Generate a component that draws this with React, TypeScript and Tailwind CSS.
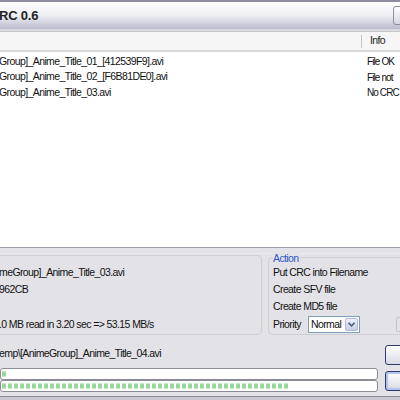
import React from 'react';

const rows = [
  { name: 'Group]_Anime_Title_01_[412539F9].avi', info: 'File OK' },
  { name: 'Group]_Anime_Title_02_[F6B81DE0].avi', info: 'File not' },
  { name: 'Group]_Anime_Title_03.avi', info: 'No CRC' },
];

const Blocks: React.FC<{ count: number }> = ({ count }) => (
  <div className="flex gap-[2px] pl-[1px] items-center h-full">
    {Array.from({ length: count }).map((_, i) => (
      <div key={i} className="w-[4px] h-[6px] bg-[#9ad69a] border-t border-b border-[#c4ebc4]" />
    ))}
  </div>
);

const App: React.FC = () => {
  return (
    <div className="w-[400px] h-[400px] overflow-hidden flex flex-col bg-[#e3e2e7] text-[#111] whitespace-nowrap font-['Liberation_Sans',Arial,sans-serif] text-[10.5px] tracking-[-0.6px]">
      {/* title bar */}
      <div className="h-[29px] shrink-0 border-t-2 border-[#8d8c9e] bg-gradient-to-b from-[#ffffff] via-[#eeeef3] to-[#bbbacd] flex items-center justify-between">
        <span className="text-[13px] font-semibold tracking-[-0.2px] text-[#222] -ml-[1px] mt-[1px]">RC 0.6</span>
        <div className="w-[10px] h-[19px] -mr-[3px] rounded-[3px] border border-[#8e8ea0] bg-gradient-to-b from-[#ffffff] to-[#d6d6e0]" />
      </div>
      <div className="h-[3px] shrink-0 bg-[#dadae0] border-b border-[#c8c8d0]" />

      {/* list header */}
      <div className="h-[20px] shrink-0 bg-[#f6f6f6] border-b-2 border-[#d9d9d9] flex items-center">
        <div className="flex-1" />
        <div className="w-[1px] h-[13px] bg-[#c5c5c5]" />
        <span className="w-[38px] pl-[8px] text-[#222]">Info</span>
      </div>

      {/* list */}
      <div className="h-[196px] shrink-0 bg-white border-b border-[#9c9ca8] pt-[2px]">
        {rows.map(r => (
          <div key={r.name} className="h-[15.5px] flex items-center">
            <span className="flex-1 -ml-[1px]">{r.name}</span>
            <span className="w-[33px] text-[10px] tracking-[-0.9px]">{r.info}</span>
          </div>
        ))}
      </div>

      {/* lower panel */}
      <div className="flex-1 flex flex-col">
        <div className="h-[6px] border-b border-[#ecebef]" />
        <div className="flex gap-[6px] mt-[1px]">
          <div className="w-[262px] h-[80px] shrink-0 border border-l-0 border-[#cfcdd6] rounded-r-[5px] flex flex-col pt-[8px]">
            <div className="h-[17.5px] flex items-center -ml-[1px]">meGroup]_Anime_Title_03.avi</div>
            <div className="h-[17.5px] flex items-center -ml-[1px]">962CB</div>
            <div className="h-[17.5px]" />
            <div className="h-[17.5px] flex items-center -ml-[1px]">.0 MB read in 3.20 sec =&gt; 53.15 MB/s</div>
          </div>
          <div className="relative w-[150px] h-[78px] mt-[2px] shrink-0 border border-r-0 border-[#cfcdd6] rounded-l-[5px] flex flex-col pt-[6px] pl-[4px]">
            <span className="absolute -top-[7px] left-[3px] px-[1px] bg-[#e3e2e7] text-[#2f55c8]">Action</span>
            <div className="h-[17.5px] flex items-center">Put CRC into Filename</div>
            <div className="h-[17.5px] flex items-center">Create SFV file</div>
            <div className="h-[17.5px] flex items-center">Create MD5 file</div>
            <div className="h-[19px] flex items-center">
              <span className="w-[35px]">Priority</span>
              <div className="w-[52px] h-[17px] border border-[#7f9db9] bg-white flex items-center justify-between pl-[2px] pr-[1px]">
                <span>Normal</span>
                <div className="w-[13px] h-[13px] rounded-[2px] border border-[#b5b9cf] bg-gradient-to-b from-[#eef0fb] to-[#c8cde6] flex items-center justify-center">
                  <svg width="7" height="5" viewBox="0 0 7 5"><path d="M0.5 0.8 L3.5 3.8 L6.5 0.8" fill="none" stroke="#4d6185" strokeWidth="1.6" /></svg>
                </div>
              </div>
              <div className="ml-[36px] w-[10px] h-[15px] rounded-[2px] border border-[#c5c4cc]" />
            </div>
          </div>
        </div>

        <div className="flex gap-[7px] mt-[8px]">
          <div className="w-[378px] shrink-0 flex flex-col">
            <div className="h-[22px] flex items-center -ml-[1px]">emp\[AnimeGroup]_Anime_Title_04.avi</div>
            <div className="h-[12px] mt-[3px] border border-[#8c8c94] rounded-[3px] bg-white overflow-hidden">
              <Blocks count={1} />
            </div>
            <div className="h-[12px] border border-[#8c8c94] rounded-[3px] bg-white overflow-hidden">
              <Blocks count={48} />
            </div>
          </div>
          <div className="flex flex-col gap-[6px] pt-[2px]">
            <div className="w-[30px] h-[20px] rounded-[3px] border border-[#2e3a6a] bg-gradient-to-b from-[#ffffff] to-[#d9d9e4]" />
            <div className="w-[30px] h-[20px] rounded-[3px] border border-[#2e3a6a] bg-gradient-to-b from-[#ffffff] to-[#d9d9e4] shadow-[inset_0_0_0_2px_#b0c4ef]" />
          </div>
        </div>
        <div className="mt-auto h-[4px] border-t border-[#8c8c94] bg-[#c9c8d0]" />
      </div>
    </div>
  );
};

export default App;
